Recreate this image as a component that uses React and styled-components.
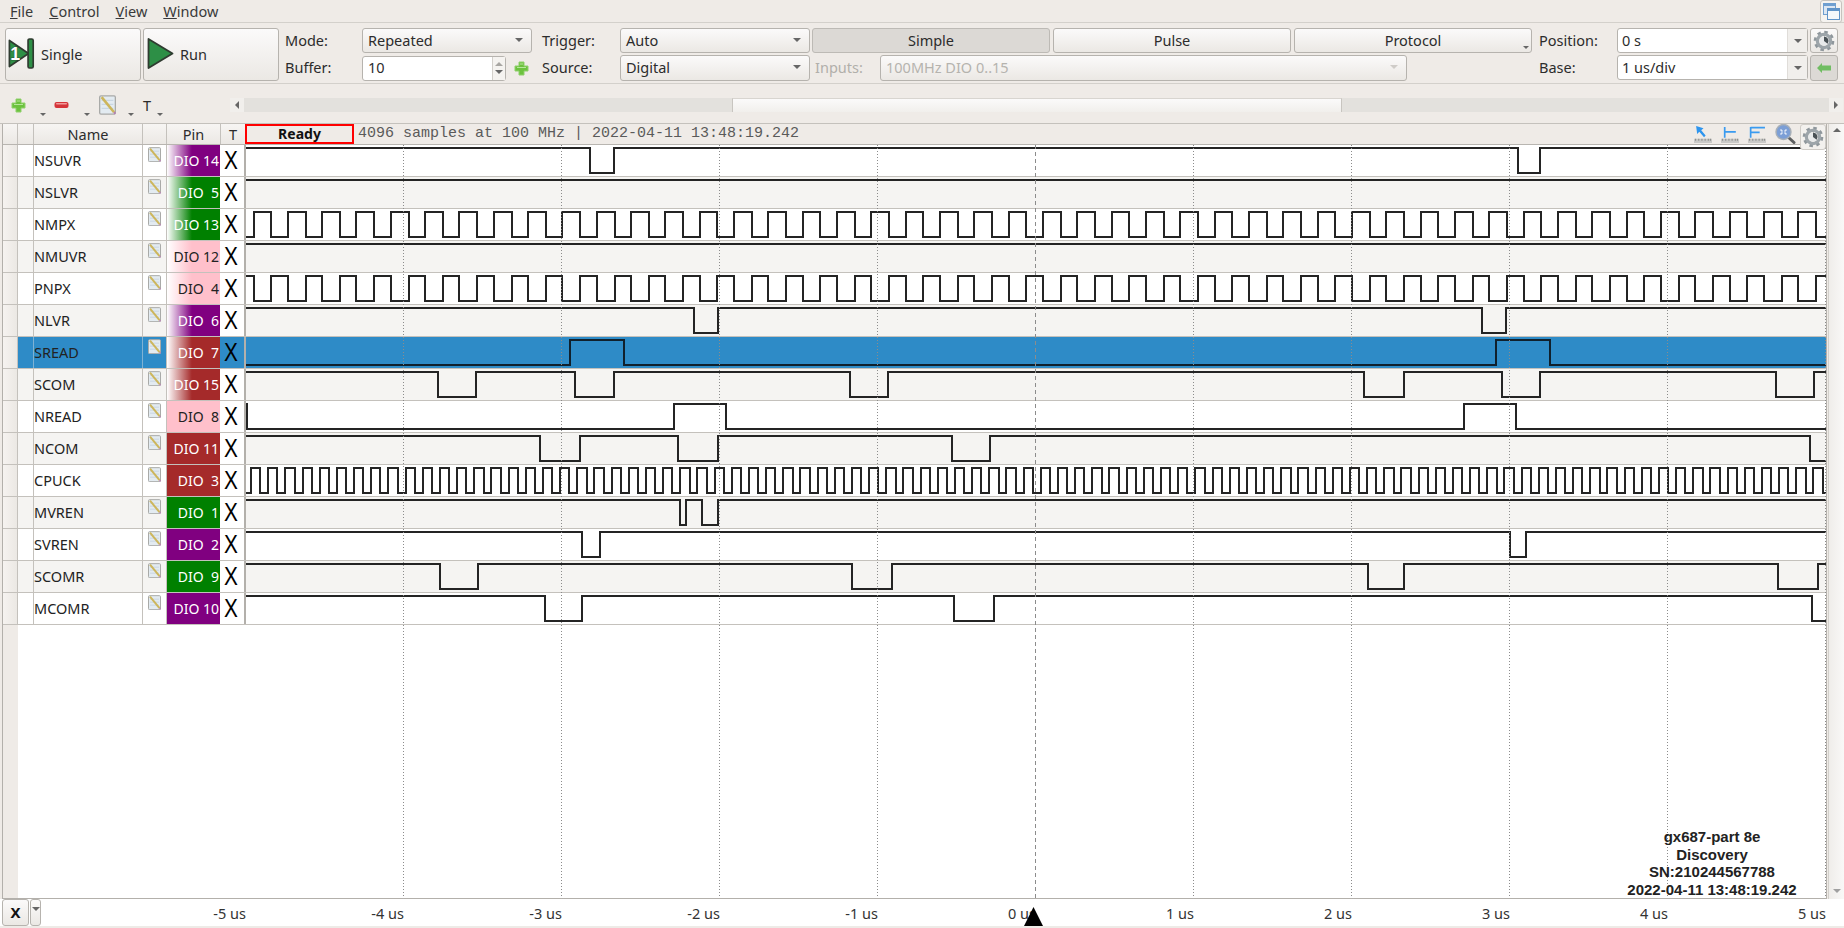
import React from "react";
import styled, { createGlobalStyle, css } from "styled-components";

const GlobalStyle = createGlobalStyle`
  html, body {
    margin: 0;
    padding: 0;
    background: #efebe7;
  }
  * {
    box-sizing: border-box;
  }
`;

const LINE = "#c4c1bc";
const raised = css`
  background: linear-gradient(#fbfafa, #ebe8e4);
  border: 1px solid #b6b3ae;
  border-radius: 3px;
`;

const Window = styled.div`
  width: 1844px;
  height: 928px;
  overflow: hidden;
  display: flex;
  flex-direction: column;
  background: #efebe7;
  color: #2c2c2c;
  font-family: "Noto Sans", sans-serif;
  font-size: 14.5px;
`;

const MenuBar = styled.div`
  height: 23px;
  flex: none;
  display: flex;
  align-items: center;
  gap: 16px;
  padding-left: 10px;
  border-bottom: 1px solid #d3d0cb;
  position: relative;
`;
const MenuItem = styled.span`
  color: #3a3a3a;
  line-height: 22px;
`;
const CornerButton = styled.div`
  position: absolute;
  right: 2px;
  top: 0;
  width: 22px;
  height: 23px;
  border: 1px solid #c6c3be;
  border-radius: 3px;
  background: #f5f3f0;
  display: flex;
  align-items: center;
  justify-content: center;
`;

const ToolBar = styled.div`
  height: 61px;
  flex: none;
  display: grid;
  grid-template-columns: 138px 142px 77px 180px 78px 192px 727px 78px 193px 28px;
  grid-template-rows: 25px 26px;
  row-gap: 2px;
  padding: 5px 0 0 5px;
  border-bottom: 1px solid #d3d0cb;
`;
const BigButton = styled.div`
  ${raised}
  grid-row: 1 / span 2;
  width: 136px;
  display: flex;
  align-items: center;
  gap: ${(p) => p.$gap}px;
  padding: 0 0 2px ${(p) => p.$pad}px;
`;
const Label = styled.div`
  display: flex;
  align-items: center;
  padding-bottom: 2px;
  ${(p) => p.$column && `grid-column: ${p.$column};`}
  color: ${(p) => (p.$disabled ? "#b1afaa" : "#2c2c2c")};
`;
const Combo = styled.div`
  ${raised}
  width: ${(p) => p.$w}px;
  display: flex;
  align-items: center;
  justify-content: space-between;
  padding: 0 8px 2px 5px;
  color: ${(p) => (p.$disabled ? "#b5b3ae" : "#2c2c2c")};
  font-size: 14.5px;
`;
const Triangle = styled.i`
  display: block;
  width: 0;
  height: 0;
  border-left: ${(p) => p.$size || 4}px solid transparent;
  border-right: ${(p) => p.$size || 4}px solid transparent;
  ${(p) =>
    p.$up
      ? css`border-bottom: ${p.$size || 4}px solid ${p.$color || "#666"};`
      : css`border-top: ${p.$size || 4}px solid ${p.$color || "#666"};`}
`;
const FieldRow = styled.div`
  display: flex;
  align-items: center;
  gap: 8px;
`;
const Spinner = styled.div`
  width: 144px;
  height: 25px;
  border: 1px solid #b6b3ae;
  border-radius: 3px;
  background: #fff;
  display: flex;
  align-items: center;
  justify-content: space-between;
  padding-left: 5px;
`;
const SpinValue = styled.span`
  padding-bottom: 2px;
`;
const SpinArrows = styled.div`
  width: 13px;
  height: 100%;
  border-left: 1px solid #d3d0cb;
  background: #f5f3f0;
  display: flex;
  flex-direction: column;
  align-items: center;
  justify-content: center;
  gap: 4px;
`;
const ModeGroup = styled.div`
  display: flex;
  gap: 3px;
`;
const ModeButton = styled.div`
  ${(p) =>
    p.$active
      ? css`
          background: #dcd9d5;
          border: 1px solid #bdbab5;
          border-radius: 3px;
        `
      : raised}
  width: 238px;
  height: 25px;
  padding-bottom: 2px;
  display: flex;
  align-items: center;
  justify-content: center;
  position: relative;
`;
const CornerArrow = styled.span`
  position: absolute;
  right: 2px;
  bottom: 3px;
`;
const InputsRow = styled.div`
  display: flex;
  padding-left: 3px;
`;
const InputsLabel = styled(Label)`
  width: 65px;
`;
const Editable = styled.div`
  width: 191px;
  height: 25px;
  border: 1px solid #b6b3ae;
  border-radius: 3px;
  background: #fff;
  display: flex;
  justify-content: space-between;
  align-items: center;
  padding-left: 4px;
`;
const EditableDrop = styled.div`
  width: 20px;
  height: 100%;
  background: #f1efec;
  border-left: 1px solid #e0ddd9;
  display: flex;
  align-items: center;
  justify-content: center;
`;
const SmallButton = styled.div`
  ${raised}
  width: 28px;
  display: flex;
  align-items: center;
  justify-content: center;
  ${(p) => p.$pressed && "background: #dcd9d5;"}
`;

const SecondBar = styled.div`
  height: 40px;
  flex: none;
  display: flex;
  align-items: center;
  padding: 3px 1px 0 10px;
  border-bottom: 1px solid ${LINE};
`;
const ToolGroup = styled.div`
  width: 44px;
  height: 30px;
  display: flex;
  position: relative;
`;
const ToolSlot = styled.div`
  width: ${(p) => p.$w || 30}px;
  display: flex;
  align-items: center;
  padding-left: ${(p) => p.$pad || 0}px;
`;
const ToolDrop = styled.div`
  align-self: flex-end;
  margin-bottom: 4px;
`;
const HScroll = styled.div`
  margin-left: auto;
  width: 1613px;
  height: 14px;
  display: flex;
  background: #e3e1dd;
`;
const ScrollEnd = styled.div`
  width: 14px;
  background: #f1efec;
  display: flex;
  align-items: center;
  justify-content: center;
`;
const SideArrow = styled.i`
  display: block;
  width: 0;
  height: 0;
  border-top: 4px solid transparent;
  border-bottom: 4px solid transparent;
  ${(p) =>
    p.$left
      ? "border-right: 4px solid #666;"
      : "border-left: 4px solid #666;"}
`;
const ScrollHandle = styled.div`
  width: 610px;
  margin-left: 488px;
  background: linear-gradient(#fbfafa, #f1efec);
  border-left: 1px solid #c8c5c0;
  border-right: 1px solid #c8c5c0;
  border-top: 1px solid #d8d5d0;
`;
const ScrollRest = styled.div`
  flex: 1;
`;

const TableArea = styled.div`
  flex: 1;
  min-height: 0;
  display: flex;
  padding-left: 2px;
`;
const TableMain = styled.div`
  flex: 1;
  min-width: 0;
  margin-right: 1px;
  display: flex;
  flex-direction: column;
  position: relative;
  border-left: 1px solid #b3b0ab;
  border-right: 1px solid #b3b0ab;
  border-bottom: 1px solid #b3b0ab;
  background: #fff;
`;
const HeaderRow = styled.div`
  height: 21px;
  flex: none;
  display: flex;
  border-bottom: 1px solid #b8b5b0;
  background: #efebe7;
`;
const HeadCell = styled.div`
  width: ${(p) => p.$w}px;
  flex: none;
  background: linear-gradient(#f7f5f3, #ebe8e4);
  border-right: 1px solid ${LINE};
  text-align: center;
  line-height: 20px;
`;
const ReadyBox = styled.div`
  width: 109px;
  height: 20px;
  flex: none;
  margin-left: -1px;
  border: 2px solid #f00;
  background: #efebe7;
  font-weight: 700;
  font-size: 14px;
  line-height: 15px;
  text-align: center;
  color: #111;
`;
const StatusText = styled.div`
  margin-left: 4px;
  font-family: "Liberation Mono", monospace;
  font-size: 15px;
  line-height: 20px;
  color: #5a5a5a;
  white-space: pre;
`;
const PlotTools = styled.div`
  position: absolute;
  top: 0;
  right: 0;
  display: flex;
  align-items: flex-start;
  z-index: 3;
`;
const PlotTool = styled.div`
  width: ${(p) => p.$w || 27}px;
  height: 20px;
  display: flex;
  align-items: center;
`;
const PlotGear = styled.div`
  width: 26px;
  height: 26px;
  margin-left: 3px;
  background: #f3f1ee;
  border: 1px solid #cfccc7;
  border-radius: 3px;
  display: flex;
  align-items: center;
  justify-content: center;
`;

const Row = styled.div`
  height: 32px;
  flex: none;
  display: flex;
  border-bottom: 1px solid ${LINE};
  background: ${(p) => (p.$selected ? "#2e8bc7" : p.$alt ? "#f5f4f2" : "#fff")};
`;
const Grip = styled.div`
  width: 15px;
  flex: none;
  background: linear-gradient(to right, #f6f3f0, #ebe8e4);
  border-right: 1px solid ${LINE};
`;
const Gutter = styled.div`
  width: 16px;
  flex: none;
  border-right: 1px solid ${(p) => (p.$selected ? "#7fb2d4" : LINE)};
`;
const NameCell = styled.div`
  width: 109px;
  flex: none;
  line-height: 31px;
  color: #222;
  border-right: 1px solid ${(p) => (p.$selected ? "#7fb2d4" : LINE)};
`;
const NoteCell = styled.div`
  width: 24px;
  flex: none;
  padding: 2px 0 0 5px;
  border-right: 1px solid ${LINE};
`;
const PinCell = styled.div`
  width: 53px;
  flex: none;
  padding-right: 1px;
  text-align: right;
  white-space: pre;
  font-size: 14px;
  line-height: 31px;
  color: ${(p) => (p.$color === "#ffc0cb" ? "#222" : "#fff")};
  background: ${(p) =>
    p.$fade
      ? `linear-gradient(to right, #fff 0, ${p.$color} 47%)`
      : p.$color};
`;
const TCell = styled.div`
  width: 26px;
  flex: none;
  background: ${(p) => (p.$selected ? "#2e8bc7" : "#fff")};
  border-right: 2px solid #b3b0ab;
  display: flex;
  align-items: center;
  justify-content: center;
  color: #000;
  font-family: "Liberation Sans", sans-serif;
  font-size: 26px;
  line-height: 31px;
`;
const TGlyph = styled.span`
  display: block;
  padding-right: 3px;
  transform: scaleX(0.8);
`;
const PlotCell = styled.div`
  flex: 1;
  min-width: 0;
`;
const Wave = styled.svg`
  display: block;
`;
const NoteSvg = styled.svg`
  display: block;
`;

const Filler = styled.div`
  flex: 1;
  display: flex;
`;
const FillerGrip = styled.div`
  width: 15px;
  background: #efebe7;
`;
const GridOverlay = styled.svg`
  position: absolute;
  left: 243px;
  top: 21px;
  pointer-events: none;
  z-index: 2;
`;
const InfoBlock = styled.div`
  position: absolute;
  right: 0;
  bottom: 0;
  width: 228px;
  text-align: center;
  font-family: "Liberation Sans", sans-serif;
  font-weight: 700;
  font-size: 15px;
  line-height: 17.4px;
  color: #222;
  z-index: 3;
`;

const VScroll = styled.div`
  width: 16px;
  flex: none;
  display: flex;
  flex-direction: column;
  justify-content: space-between;
  align-items: center;
  background: linear-gradient(to right, #efedea, #f9f8f7);
  border-left: 1px solid #d3d0cb;
  padding: 4px 0 6px;
`;

const BottomBar = styled.div`
  height: 29px;
  flex: none;
  display: flex;
  position: relative;
  background: #fff;
  border-bottom: 2px solid #eeebe7;
  padding-left: 2px;
`;
const AxisButton = styled.div`
  ${raised}
  width: 27px;
  flex: none;
  font-weight: 700;
  font-size: 15px;
  text-align: center;
  line-height: 25px;
  color: #111;
`;
const AxisDrop = styled.div`
  ${raised}
  width: 11px;
  flex: none;
  margin-left: 1px;
  padding-top: 7px;
  display: flex;
  justify-content: center;
`;
const Ticks = styled.div`
  display: flex;
  margin-left: 47px;
`;
const Tick = styled.div`
  width: 158px;
  text-align: right;
  line-height: 28px;
  color: #333;
`;
const TriggerMark = styled.svg`
  position: absolute;
  left: 1024px;
  top: 8px;
`;

function clock(first, period, high) {
  const edges = [];
  for (let x = first; x + high < 1826; x += period) {
    edges.push(Math.round(x), Math.round(x + high));
  }
  return edges;
}

const rowsData = [
  { name: "NSUVR", pin: "DIO 14", color: "#800080", fade: true, start: 1, edges: [590, 614, 1518, 1540] },
  { name: "NSLVR", pin: "DIO  5", color: "#008000", fade: true, start: 1, edges: [] },
  { name: "NMPX", pin: "DIO 13", color: "#008000", fade: true, start: 0, edges: clock(253.5, 34.33, 17.7) },
  { name: "NMUVR", pin: "DIO 12", color: "#ffc0cb", fade: true, start: 1, edges: [] },
  { name: "PNPX", pin: "DIO  4", color: "#ffc0cb", fade: true, start: 1, edges: clock(253.5, 34.33, 17.7) },
  { name: "NLVR", pin: "DIO  6", color: "#800080", fade: true, start: 1, edges: [694, 718, 1482, 1506] },
  { name: "SREAD", pin: "DIO  7", color: "#a52a2a", fade: true, start: 0, edges: [570, 624, 1496, 1550], selected: true },
  { name: "SCOM", pin: "DIO 15", color: "#a52a2a", fade: true, start: 1, edges: [438, 476, 575, 614, 850, 888, 1364, 1404, 1502, 1540, 1776, 1814] },
  { name: "NREAD", pin: "DIO  8", color: "#ffc0cb", start: 1, edges: [247, 674, 726, 1464, 1516] },
  { name: "NCOM", pin: "DIO 11", color: "#a52a2a", start: 1, edges: [540, 580, 678, 718, 952, 990, 1810] },
  { name: "CPUCK", pin: "DIO  3", color: "#a52a2a", start: 0, edges: clock(251, 17.17, 9.3) },
  { name: "MVREN", pin: "DIO  1", color: "#008000", start: 1, edges: [680, 686, 702, 718] },
  { name: "SVREN", pin: "DIO  2", color: "#800080", start: 1, edges: [582, 600, 1510, 1526] },
  { name: "SCOMR", pin: "DIO  9", color: "#008000", start: 1, edges: [440, 478, 852, 892, 1368, 1404, 1778, 1818] },
  { name: "MCOMR", pin: "DIO 10", color: "#800080", start: 1, edges: [545, 582, 954, 994, 1812] },
];

// x values are page pixels, the viewBox starts where the plot starts
const wavePath = (start, edges) => {
  const Y = [28, 3];
  let level = start;
  let d = `M246 ${Y[level]}`;
  edges.forEach((x) => {
    level = 1 - level;
    d += `H${x}V${Y[level]}`;
  });
  return `${d}H1826`;
};

const gridX = [403.5, 561.5, 719.5, 877.5, 1193.5, 1351.5, 1509.5, 1667.5, 1825.5];
const ticks = ["-5 us", "-4 us", "-3 us", "-2 us", "-1 us", "0 us", "1 us", "2 us", "3 us", "4 us", "5 us"];

const NoteIcon = ({ size = 13 }) => (
  <NoteSvg width={size} height={size * 1.18} viewBox="0 0 13 15">
    <rect x="0.5" y="0.5" width="12" height="14" rx="1" fill="#e3ebf1" stroke="#a9aaa8" />
    <path d="M2 4H11M2 7H11M2 10H11" stroke="#c9d6e2" />
    <path d="M2 1.5L11.5 13" stroke="#cdb65c" strokeWidth="2" />
    <path d="M11.5 13L12.5 14.2" stroke="#b77fb0" strokeWidth="1.5" />
  </NoteSvg>
);

const PlusIcon = ({ size = 15 }) => (
  <svg width={size} height={size} viewBox="0 0 15 15">
    <path d="M5 1H10V5H14V10H10V14H5V10H1V5H5Z" fill="#6cc23e" stroke="#8fd06c" strokeLinejoin="round" />
    <path d="M6 3H9M3 6.5H12" stroke="#b6e79a" />
  </svg>
);

const MinusIcon = () => (
  <svg width="15" height="8" viewBox="0 0 15 8">
    <rect x="0.5" y="1" width="14" height="6" rx="2" fill="#d5343a" />
    <rect x="2" y="2" width="11" height="1.5" rx="0.7" fill="#f09a9a" />
  </svg>
);

const GearIcon = ({ size = 22 }) => (
  <svg width={size} height={size} viewBox="0 0 24 24">
    <circle cx="12" cy="12" r="9.5" fill="none" stroke="#8f979c" strokeWidth="3.5" strokeDasharray="3.7 3.76" />
    <circle cx="12" cy="12" r="7.2" fill="none" stroke="#9da5aa" strokeWidth="3.6" />
    <circle cx="12" cy="12" r="5" fill="#e8eaeb" />
    <path d="M12 12V7A5 5 0 0 1 16 15Z" fill="#4a5256" />
  </svg>
);

const Ruler = () => (
  <>
    <rect x="0" y="12" width="17" height="4" fill="#c9c9c7" />
    <path d="M1.5 12V14M4.5 12V14M7.5 12V14M10.5 12V14M13.5 12V14M15.5 12V14" stroke="#8d8d8b" />
  </>
);

const CursorTool = () => (
  <svg width="18" height="17" viewBox="0 0 17 16">
    <Ruler />
    <path d="M2 0L9 2L6.8 4L11 9L9.5 10.5L5 5.5L3 7.5Z" fill="#2e95ee" />
  </svg>
);

const OneBarTool = () => (
  <svg width="18" height="17" viewBox="0 0 17 16">
    <Ruler />
    <path d="M3.5 1V11M3.5 5.5H14" stroke="#3a9bf0" strokeWidth="1.6" fill="none" />
  </svg>
);

const TwoBarTool = () => (
  <svg width="18" height="17" viewBox="0 0 17 16">
    <Ruler />
    <path d="M2.5 1V11M2.5 1.5H16M2.5 6H11" stroke="#3a9bf0" strokeWidth="1.6" fill="none" />
  </svg>
);

const ZoomTool = () => (
  <svg width="21" height="20" viewBox="0 0 21 20">
    <path d="M13 13L19 18.5" stroke="#5d5f60" strokeWidth="3" strokeLinecap="round" />
    <circle cx="8.5" cy="8" r="7.5" fill="#7c9fd6" stroke="#a9b0b7" strokeWidth="1.4" />
    <path d="M5.5 5.5L7.5 7.5M11.5 5.5L9.5 7.5M5.5 10.5L7.5 8.5M11.5 10.5L9.5 8.5" stroke="#dfe8f6" strokeWidth="1.6" />
  </svg>
);

const SingleIcon = () => (
  <svg width="28" height="31" viewBox="0 0 30 33">
    <path d="M1.5 2.5L22 16.5L1.5 30.5Z" fill="#2d8f46" stroke="#2f3b30" strokeWidth="1.8" strokeLinejoin="round" />
    <rect x="21.5" y="1" width="5.5" height="31" rx="1.5" fill="#2d8f46" stroke="#2f3b30" strokeWidth="1.8" />
    <text x="2.5" y="24" fontFamily="Liberation Sans, sans-serif" fontSize="19" fontWeight="700" fill="#fff" stroke="#1d2a1f" strokeWidth="0.7" paintOrder="stroke">1</text>
  </svg>
);

const RunIcon = () => (
  <svg width="27" height="33" viewBox="0 0 27 33">
    <path d="M1.5 2L25.5 16.5L1.5 31Z" fill="#2d8f46" stroke="#2f3b30" strokeWidth="1.8" strokeLinejoin="round" />
  </svg>
);

const WindowsIcon = () => (
  <svg width="17" height="17" viewBox="0 0 17 17">
    <rect x="0.5" y="0.5" width="12" height="11" fill="#dbe6f2" stroke="#6f9fd0" />
    <rect x="0.5" y="0.5" width="12" height="2.5" fill="#6f9fd0" />
    <rect x="4.5" y="5.5" width="12" height="11" fill="#f4f7fa" stroke="#5f93c8" />
    <rect x="4.5" y="5.5" width="12" height="2.5" fill="#5f93c8" />
  </svg>
);

const BackArrow = () => (
  <svg width="14" height="10" viewBox="0 0 14 10">
    <path d="M0 5L5 0V2.5H14V7.5H5V10Z" fill="#70bd62" />
  </svg>
);

const Menu = ({ label }) => (
  <MenuItem>
    <u>{label[0]}</u>
    {label.slice(1)}
  </MenuItem>
);

const SignalRow = ({ signal, index }) => (
  <Row $alt={index % 2 === 1} $selected={signal.selected}>
    <Grip />
    <Gutter $selected={signal.selected} />
    <NameCell $selected={signal.selected}>{signal.name}</NameCell>
    <NoteCell>
      <NoteIcon />
    </NoteCell>
    <PinCell $color={signal.color} $fade={signal.fade}>
      {signal.pin}
    </PinCell>
    <TCell $selected={signal.selected}>
      <TGlyph>X</TGlyph>
    </TCell>
    <PlotCell>
      <Wave width="1580" height="31" viewBox="246 0 1580 31">
        <path
          d={wavePath(signal.start, signal.edges)}
          fill="none"
          stroke={signal.selected ? "#10202c" : "#242424"}
          strokeWidth="2"
          shapeRendering="crispEdges"
        />
      </Wave>
    </PlotCell>
  </Row>
);

const App = () => {
  return (
    <>
      <GlobalStyle />
      <Window>
        <MenuBar>
          <Menu label="File" />
          <Menu label="Control" />
          <Menu label="View" />
          <Menu label="Window" />
          <CornerButton>
            <WindowsIcon />
          </CornerButton>
        </MenuBar>

        <ToolBar>
          <BigButton $pad={2} $gap={5}>
            <SingleIcon />
            Single
          </BigButton>
          <BigButton $pad={3} $gap={6}>
            <RunIcon />
            Run
          </BigButton>

          <Label>Mode:</Label>
          <Combo $w={170}>
            Repeated
            <Triangle />
          </Combo>
          <Label>Trigger:</Label>
          <Combo $w={190}>
            Auto
            <Triangle />
          </Combo>
          <ModeGroup>
            <ModeButton $active>Simple</ModeButton>
            <ModeButton>Pulse</ModeButton>
            <ModeButton>
              Protocol
              <CornerArrow>
                <Triangle $size={3} />
              </CornerArrow>
            </ModeButton>
          </ModeGroup>
          <Label>Position:</Label>
          <Editable>
            <SpinValue>0 s</SpinValue>
            <EditableDrop>
              <Triangle />
            </EditableDrop>
          </Editable>
          <SmallButton>
            <GearIcon />
          </SmallButton>

          <Label $column={3}>Buffer:</Label>
          <FieldRow>
            <Spinner>
              <SpinValue>10</SpinValue>
              <SpinArrows>
                <Triangle $up $size={4} $color="#a8a6a2" />
                <Triangle $size={4} />
              </SpinArrows>
            </Spinner>
            <PlusIcon />
          </FieldRow>
          <Label>Source:</Label>
          <Combo $w={190}>
            Digital
            <Triangle />
          </Combo>
          <InputsRow>
            <InputsLabel $disabled>Inputs:</InputsLabel>
            <Combo $w={527} $disabled>
              100MHz DIO 0..15
              <Triangle $color="#cfccc8" />
            </Combo>
          </InputsRow>
          <Label>Base:</Label>
          <Editable>
            <SpinValue>1 us/div</SpinValue>
            <EditableDrop>
              <Triangle />
            </EditableDrop>
          </Editable>
          <SmallButton $pressed>
            <BackArrow />
          </SmallButton>
        </ToolBar>

        <SecondBar>
          <ToolGroup>
            <ToolSlot $pad={1}>
              <PlusIcon />
            </ToolSlot>
            <ToolDrop>
              <Triangle $size={3} />
            </ToolDrop>
          </ToolGroup>
          <ToolGroup>
            <ToolSlot>
              <MinusIcon />
            </ToolSlot>
            <ToolDrop>
              <Triangle $size={3} />
            </ToolDrop>
          </ToolGroup>
          <ToolGroup>
            <ToolSlot $pad={1}>
              <NoteIcon size={17} />
            </ToolSlot>
            <ToolDrop>
              <Triangle $size={3} />
            </ToolDrop>
          </ToolGroup>
          <ToolGroup>
            <ToolSlot $w={15} $pad={1}>
              T
            </ToolSlot>
            <ToolDrop>
              <Triangle $size={3} />
            </ToolDrop>
          </ToolGroup>
          <HScroll>
            <ScrollEnd>
              <SideArrow $left />
            </ScrollEnd>
            <ScrollHandle />
            <ScrollRest />
            <ScrollEnd>
              <SideArrow />
            </ScrollEnd>
          </HScroll>
        </SecondBar>

        <TableArea>
          <TableMain>
            <HeaderRow>
              <HeadCell $w={15} />
              <HeadCell $w={16} />
              <HeadCell $w={109}>Name</HeadCell>
              <HeadCell $w={24} />
              <HeadCell $w={54}>Pin</HeadCell>
              <HeadCell $w={25}>T</HeadCell>
              <ReadyBox>Ready</ReadyBox>
              <StatusText>4096 samples at 100 MHz | 2022-04-11 13:48:19.242</StatusText>
            </HeaderRow>
            <PlotTools>
              <PlotTool>
                <CursorTool />
              </PlotTool>
              <PlotTool>
                <OneBarTool />
              </PlotTool>
              <PlotTool>
                <TwoBarTool />
              </PlotTool>
              <PlotTool $w={22}>
                <ZoomTool />
              </PlotTool>
              <PlotGear>
                <GearIcon />
              </PlotGear>
            </PlotTools>

            {rowsData.map((signal, index) => (
              <SignalRow key={signal.name} signal={signal} index={index} />
            ))}

            <Filler>
              <FillerGrip />
            </Filler>

            <GridOverlay width="1580" height="753" viewBox="246 0 1580 753">
              {gridX.map((x) => (
                <path key={x} d={`M${x} 0V753`} stroke="#8c8c8c" strokeDasharray="1 2" shapeRendering="crispEdges" />
              ))}
              <path d="M1035.5 0V753" stroke="#8c8c8c" strokeDasharray="4 3" shapeRendering="crispEdges" />
            </GridOverlay>

            <InfoBlock>
              gx687-part 8e
              <br />
              Discovery
              <br />
              SN:210244567788
              <br />
              2022-04-11 13:48:19.242
            </InfoBlock>
          </TableMain>
          <VScroll>
            <Triangle $up />
            <Triangle $color="#a0a0a0" />
          </VScroll>
        </TableArea>

        <BottomBar>
          <AxisButton>X</AxisButton>
          <AxisDrop>
            <Triangle />
          </AxisDrop>
          <Ticks>
            {ticks.map((t) => (
              <Tick key={t}>{t}</Tick>
            ))}
          </Ticks>
          <TriggerMark width="19" height="19" viewBox="0 0 19 19">
            <path d="M9.5 0L19 19H0Z" fill="#000" />
          </TriggerMark>
        </BottomBar>
      </Window>
    </>
  );
};

export default App;
